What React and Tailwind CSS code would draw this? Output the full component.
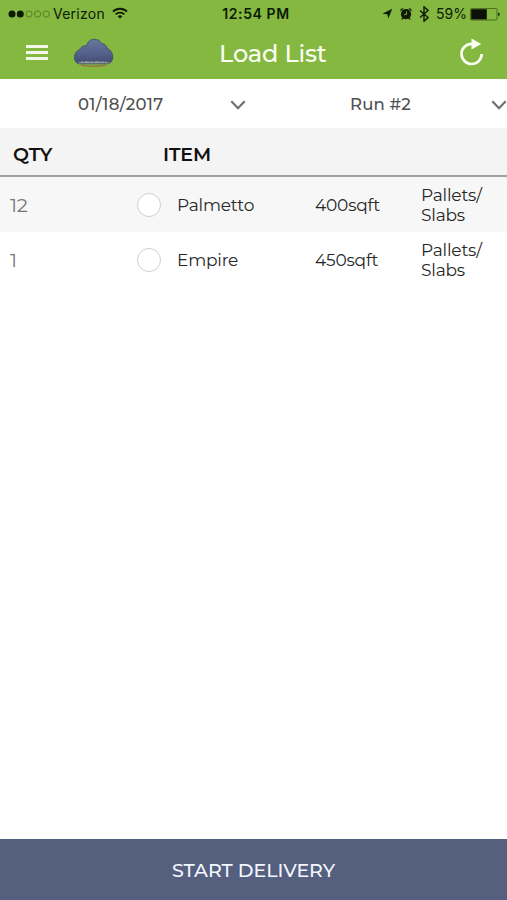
const rows = [
    { qty: '12', name: 'Palmetto', area: '400sqft', unit: ['Pallets/', 'Slabs'] },
    { qty: '1', name: 'Empire', area: '450sqft', unit: ['Pallets/', 'Slabs'] },
];

function SignalDots() {
    return (
        <svg width="42" height="10" viewBox="0 0 42 10" className="shrink-0">
            <circle cx="4" cy="5" r="3.5" fill="#0d1a05" />
            <circle cx="12.3" cy="5" r="3.5" fill="#0d1a05" />
            <circle cx="21" cy="5" r="3.1" fill="none" stroke="#4d7020" strokeWidth="0.8" />
            <circle cx="29.6" cy="5" r="3.1" fill="none" stroke="#4d7020" strokeWidth="0.8" />
            <circle cx="38.2" cy="5" r="3.1" fill="none" stroke="#4d7020" strokeWidth="0.8" />
        </svg>
    );
}

function WifiIcon() {
    return (
        <svg width="16" height="12" viewBox="0 0 16 12" fill="none" stroke="#0d1a05" strokeWidth="1.9" className="mb-[2px] shrink-0">
            <path d="M1 4.6a10 10 0 0 1 14 0" />
            <path d="M3.7 7.4a6.1 6.1 0 0 1 8.6 0" />
            <path d="M8 11.6 5.6 9.3a3.5 3.5 0 0 1 4.8 0z" fill="#0d1a05" stroke="none" />
        </svg>
    );
}

function StatusIcons() {
    return (
        <svg width="48" height="16" viewBox="0 0 48 16" className="shrink-0">
            {/* location */}
            <path d="M11.2 2.8 7.4 12.6 6.3 8.3 1.4 7.8z" fill="#0d1a05" />
            {/* alarm */}
            <circle cx="25" cy="8.2" r="5.1" fill="#0d1a05" />
            <path d="M19.5 5.4a2.2 2.2 0 0 1 3.1-2.8zM30.5 5.4a2.2 2.2 0 0 0-3.1-2.8zM21.5 11.4l-1.3 2h1.5l1.3-1.2zM28.5 11.4l1.3 2h-1.5L27 12.2z" fill="#0d1a05" />
            <path d="M25.6 5.4v3.2H23" fill="none" stroke="#84b840" strokeWidth="0.9" />
            {/* bluetooth */}
            <path d="m39 4.4 8 7.2-4 3.6V.8l4 3.6-8 7.2" fill="none" stroke="#0d1a05" strokeWidth="1.4" />
        </svg>
    );
}

function Battery() {
    return (
        <svg width="31" height="13" viewBox="0 0 31 13" className="shrink-0">
            <rect x="0.5" y="0.5" width="26.5" height="11.5" rx="1" fill="none" stroke="#3f5e1b" strokeWidth="0.8" />
            <rect x="1.2" y="1.2" width="15.6" height="10.2" fill="#0d1007" />
            <path d="M28.3 4.2a2.3 2.3 0 0 1 0 4.2z" fill="#0d1a05" />
        </svg>
    );
}

function CloudLogo() {
    return (
        <svg width="42" height="30" viewBox="0 0 42 30">
            <defs>
                <linearGradient id="cloud" x1="0" y1="0" x2="0" y2="1">
                    <stop offset="0" stopColor="#68769c" />
                    <stop offset="0.5" stopColor="#56648e" />
                    <stop offset="1" stopColor="#434c70" />
                </linearGradient>
            </defs>
            <path d="M8 27.2q13 2 25 0" fill="none" stroke="#9a7a44" strokeWidth="1.6" />
            <path d="M6 25.8C3 25 1.4 22.6 1.4 19.4c0-3.4 2-6.4 5.2-8 1.6-2.6 4-3.9 7.2-3.8C15 3.4 17.400 1.300 20.800 1.300c3.800 0 6.100 1.300 7.700 4.200 3 .300 4.900 1.900 5.600 4.700 3.700 1.700 5.700 4.900 5.700 8.800 0 3.600-1.800 6.100-4.800 6.800z" fill="url(#cloud)" stroke="#43566b" strokeWidth="1" />
            <path d="M5.500 24.700h31" stroke="#84938f" strokeWidth="1.300" />
            <path d="M8 24.200h25" stroke="#a3b3aa" strokeWidth="1.200" strokeDasharray="2 1.500 4 1 1 0.800" />
        </svg>
    );
}

function RefreshIcon() {
    return (
        <svg width="26" height="30" viewBox="0 0 26 30">
            <path d="M13.8 5.8H12.600A10.100 10.100 0 1 0 22.700 16" fill="none" stroke="#fbfff2" strokeWidth="2.700" />
            <path d="M12.500 .6 22.200 6 12.500 11.400z" fill="#fbfff2" />
        </svg>
    );
}

function Chevron() {
    return (
        <svg width="16" height="11" viewBox="0 0 16 11" fill="none" stroke="#707070" strokeWidth="2.2" className="shrink-0">
            <path d="m1.3 2.3 6.7 6.900 6.700-6.900" />
        </svg>
    );
}

export default function App() {
    return (
        <div className="flex h-[900px] w-[507px] flex-col overflow-hidden bg-white font-['Montserrat','Inter',sans-serif] text-[#272727]">
            <header className="h-[79px] shrink-0 bg-[#84b840]">
                <div className="grid h-[27px] grid-cols-3 items-center pt-px font-['Inter',sans-serif] text-[14px] leading-none text-[#0d1a05]">
                    <div className="flex items-center pl-2">
                        <SignalDots />
                        <span className="ml-[3px] mr-[7px] tracking-[0.25px]">Verizon</span>
                        <WifiIcon />
                    </div>
                    <div className="pl-[5px] text-center text-[14px] font-semibold tracking-[0.6px]">12:54 PM</div>
                    <div className="flex items-center justify-end pr-[6px]">
                        <StatusIcons />
                        <span className="ml-[7px] mr-[3px]">59%</span>
                        <Battery />
                    </div>
                </div>
                <div className="flex h-[52px] items-center">
                    <button className="ml-[26px] flex w-[22px] flex-col gap-[3px] pb-[2px]" aria-label="Menu">
                        <span className="h-[3px] w-full bg-[#f3f9e6]" />
                        <span className="h-[3px] w-full bg-[#f3f9e6]" />
                        <span className="h-[3px] w-full bg-[#f3f9e6]" />
                    </button>
                    <div className="ml-[25px] pb-px"><CloudLogo /></div>
                    <h1 className="ml-[104px] flex-1 whitespace-nowrap pt-[2px] text-[24px] font-medium leading-none tracking-[-0.2px] text-[#fbfff2]">Load List</h1>
                    <button className="mr-[22px] pb-px" aria-label="Refresh"><RefreshIcon /></button>
                </div>
            </header>

            <div className="flex h-[49px] shrink-0 items-center pt-[2px] text-[16.5px] font-medium leading-none text-[#505050]">
                <button className="flex w-[260px] items-center justify-between pl-[78px] pr-[14px]">
                    <span className="tracking-[0.3px]">01/18/2017</span>
                    <Chevron />
                </button>
                <button className="flex w-[247px] items-center justify-between pl-[90px]">
                    <span className="tracking-[0.15px]">Run #2</span>
                    <Chevron />
                </button>
            </div>

            <div className="flex h-[49px] shrink-0 items-center border-b-2 border-[#a0a19f] bg-[#f4f4f4] pt-[6px] text-[19px] font-semibold leading-none tracking-[-0.1px] text-[#111]">
                <div className="w-[163px] pl-[13px]">QTY</div>
                <div>ITEM</div>
            </div>

            <div>
                {rows.map((row) => (
                    <div key={row.name} className="flex h-[55px] items-center text-[17px] leading-5 tracking-[-0.2px] odd:bg-[#f7f7f7]">
                        <div className="w-[137px] pl-[10px] pt-px text-[19.5px] text-[#777]">{row.qty}</div>
                        <div className="mr-4 size-6 shrink-0 rounded-full border border-[#cecece] bg-white" />
                        <div className="w-[138px]">{row.name}</div>
                        <div className="w-[106px]">{row.area}</div>
                        <div className="pt-px">
                            {row.unit.map((line) => <div key={line}>{line}</div>)}
                        </div>
                    </div>
                ))}
            </div>

            <button className="mt-auto h-[61px] shrink-0 bg-[#55607f] pt-[2px] text-center text-[19px] font-medium leading-none text-[#f3f7ff]">
                START DELIVERY
            </button>
        </div>
    );
}
